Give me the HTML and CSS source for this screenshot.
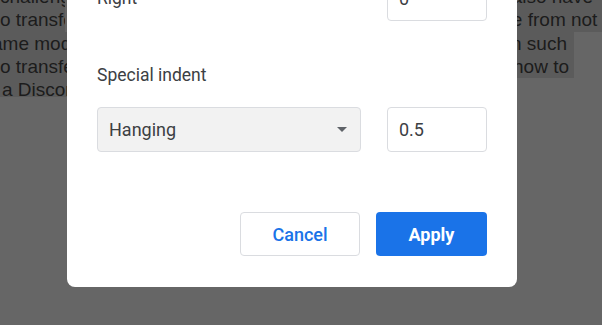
FILE: index.html
```html
<!DOCTYPE html>
<html>
<head>
<meta charset="utf-8">
<link rel="stylesheet" href="styles.css">
</head>
<body>
<div class="page">
  <div class="doc">
    <div class="line">
      <div class="frag left sel">challenge,</div>
      <div class="frag right sel full" style="text-indent:-18px">s also have</div>
    </div>
    <div class="line">
      <div class="frag left sel">o transfe</div>
      <div class="frag right sel full" style="text-indent:-3px">e from not</div>
    </div>
    <div class="line">
      <div class="frag left sel" style="text-indent:-8px">ame mod</div>
      <div class="frag right sel part" style="text-indent:-6px">n such</div>
    </div>
    <div class="line">
      <div class="frag left sel">o transfe</div>
      <div class="frag right sel part" style="text-indent:-4px">how to</div>
    </div>
    <div class="line">
      <div class="frag left sel last" style="text-indent:2px">a Discor</div>
      <div class="frag right"></div>
    </div>
  </div>

  <div class="dialog">
    <div class="row">
      <span class="label">Right</span>
      <div class="field num">0</div>
    </div>
    <div class="section-label">Special indent</div>
    <div class="row indent-row">
      <div class="field select">
        <span>Hanging</span>
        <span class="caret"></span>
      </div>
      <div class="field num">0.5</div>
    </div>
    <div class="actions">
      <button class="btn cancel">Cancel</button>
      <button class="btn apply">Apply</button>
    </div>
  </div>
</div>
</body>
</html>
```

FILE: styles.css
```css
html, body {
  margin: 0;
  padding: 0;
  width: 602px;
  height: 325px;
  overflow: hidden;
  background: #666666;
}

.page {
  position: relative;
  width: 602px;
  height: 325px;
  overflow: hidden;
}

.doc {
  margin-top: -15px;
  display: flex;
  flex-direction: column;
  font-family: "Liberation Sans", Arial, sans-serif;
  font-size: 19px;
  color: #1c1c1c;
}

.line {
  display: flex;
  height: 23.33px;
  line-height: 23.33px;
}

.frag {
  white-space: nowrap;
  overflow: hidden;
  height: 23.33px;
}

.left {
  width: 67px;
}

.right {
  margin-left: 450px;
  width: 90px;
}

.sel {
  background: #5b5b5b;
}

.right.part {
  width: 57px;
}

.left.last {
  height: 18.7px;
  overflow: visible;
}

.dialog {
  position: absolute;
  left: 67px;
  top: -60px;
  width: 450px;
  box-sizing: border-box;
  padding: 35.5px 30px 31px;
  background: #ffffff;
  border-radius: 0 0 8px 8px;
  font-family: Roboto, "Noto Sans", sans-serif;
  color: #3c4043;
  display: flex;
  flex-direction: column;
}

.row {
  display: flex;
  justify-content: space-between;
  align-items: center;
}

.label {
  font-size: 17.5px;
}

.section-label {
  margin-top: 42.5px;
  font-size: 17.5px;
  line-height: 24px;
  height: 24px;
}

.indent-row {
  margin-top: 20px;
}

.field {
  box-sizing: border-box;
  height: 45px;
  border: 1px solid #dadce0;
  border-radius: 4px;
  font-size: 18px;
  display: flex;
  align-items: center;
  padding-left: 11px;
  color: #3c4043;
}

.num {
  width: 100px;
  background: #ffffff;
}

.select {
  width: 264px;
  background: #f2f2f2;
  justify-content: space-between;
  padding-right: 13px;
}

.caret {
  width: 0;
  height: 0;
  border-left: 5px solid transparent;
  border-right: 5px solid transparent;
  border-top: 5px solid #5f6368;
}

.actions {
  margin-top: 60px;
  display: flex;
  justify-content: flex-end;
  gap: 16px;
}

.btn {
  box-sizing: border-box;
  height: 44px;
  border-radius: 4px;
  font-family: Roboto, "Noto Sans", sans-serif;
  font-size: 18px;
  font-weight: 500;
  padding: 0;
  cursor: pointer;
}

.cancel {
  width: 120px;
  background: #ffffff;
  border: 1px solid #dadce0;
  color: #1a73e8;
}

.apply {
  width: 111px;
  background: #1a73e8;
  border: none;
  color: #ffffff;
  font-weight: 700;
}
```
